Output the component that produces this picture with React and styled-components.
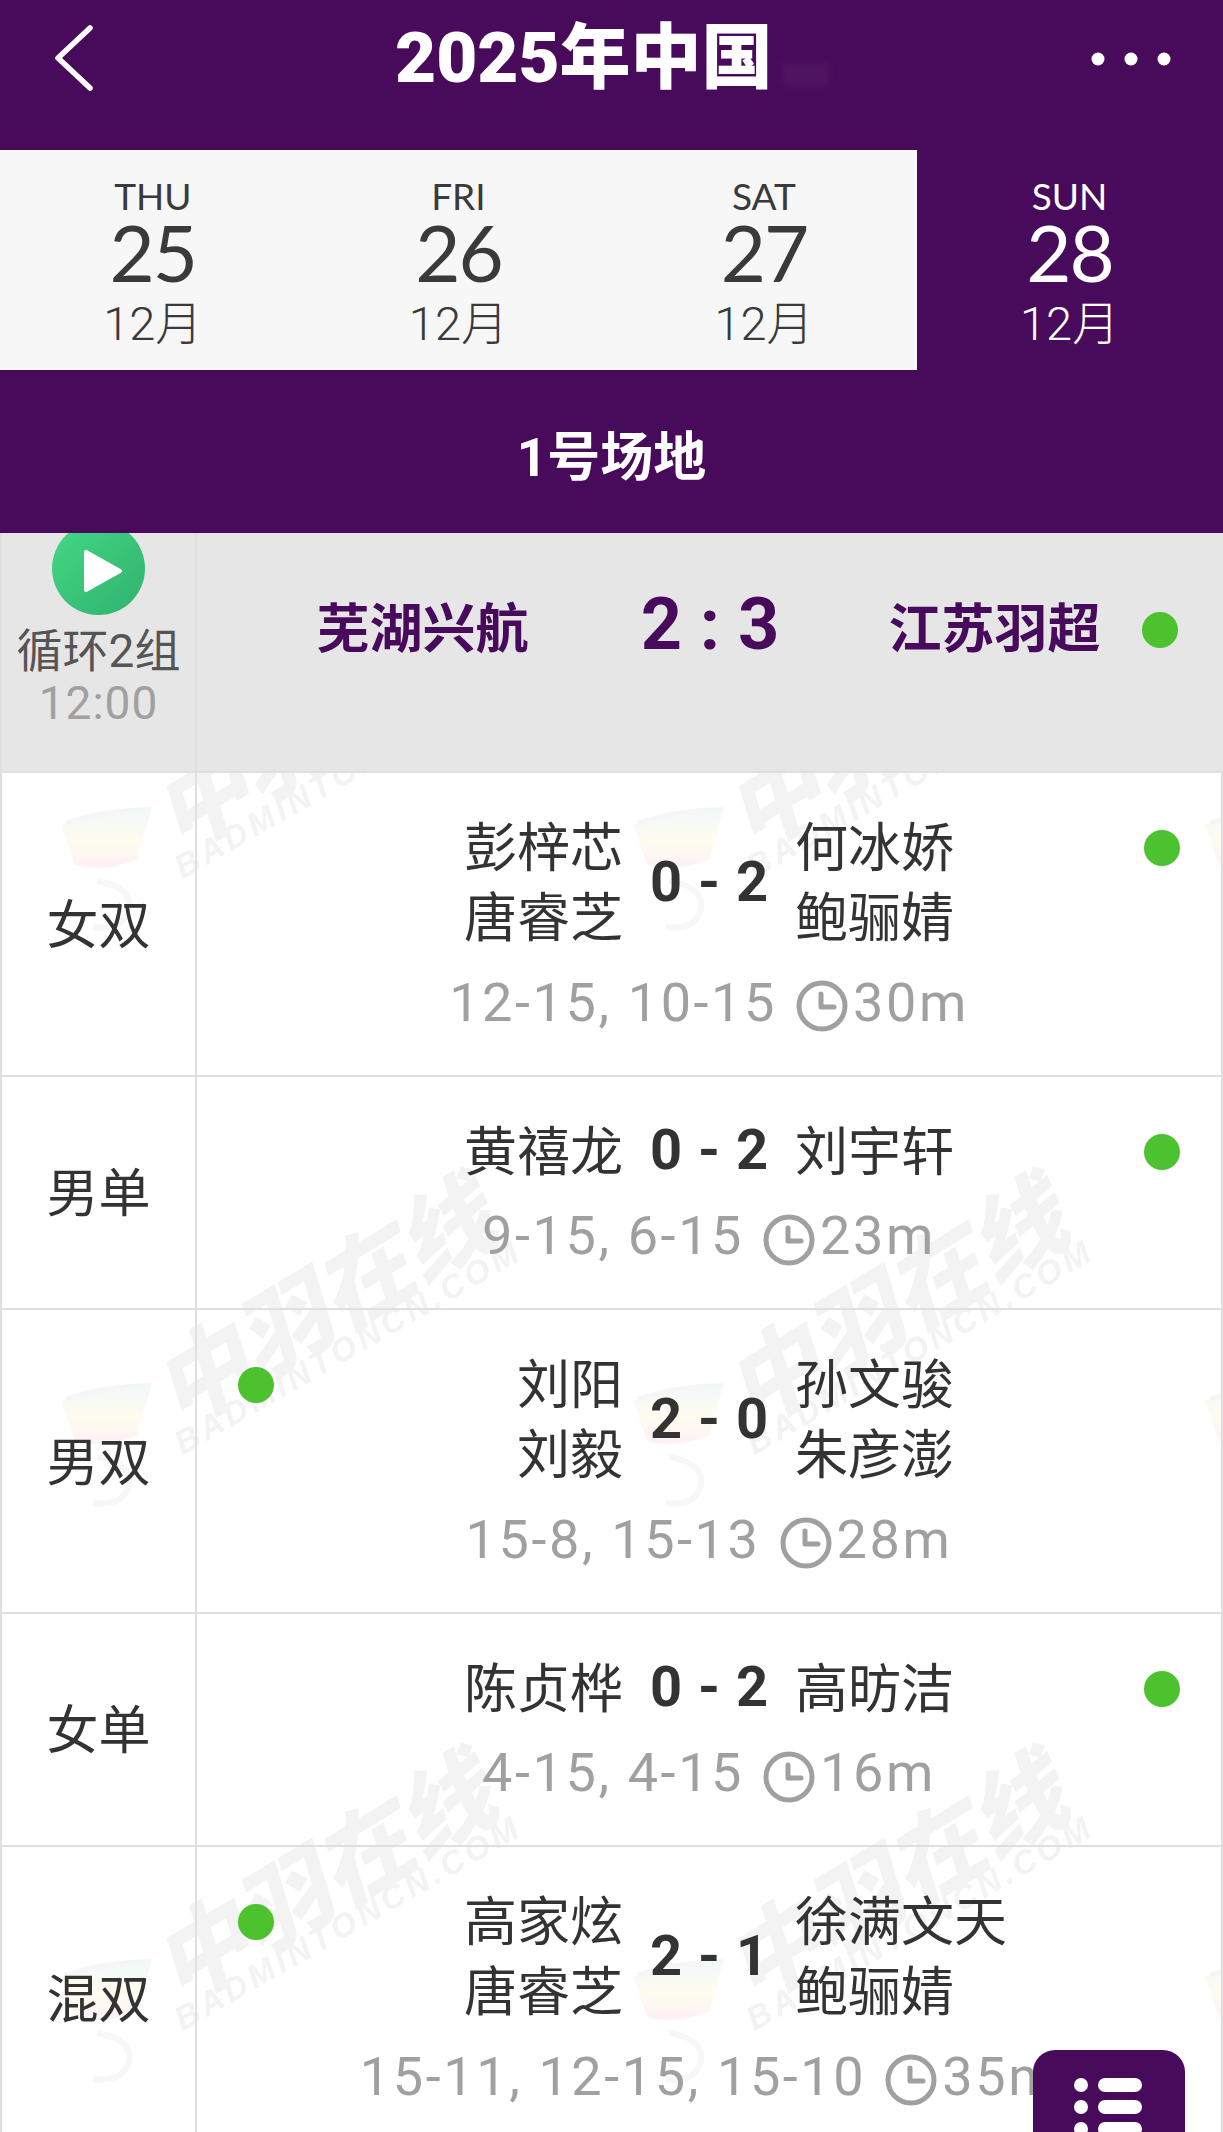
import React from "react";
import styled, { createGlobalStyle } from "styled-components";

const PURPLE = "#480b5c";
const LINE = "#dfdfdf";
const GREY = "#a0a0a0";
const SANS = `Roboto, "Noto Sans CJK SC", sans-serif`;

const GlobalStyle = createGlobalStyle`
  html, body {
    margin: 0;
    padding: 0;
    background: #fff;
  }
`;

const days = [
  { name: "THU", day: 25 },
  { name: "FRI", day: 26 },
  { name: "SAT", day: 27 },
  { name: "SUN", day: 28, active: true },
];

const matches = [
  { type: "女双", left: ["彭梓芯", "唐睿芝"], right: ["何冰娇", "鲍骊婧"], score: "0 - 2", sets: "12-15, 10-15", time: "30m", won: "right" },
  { type: "男单", left: ["黄禧龙"], right: ["刘宇轩"], score: "0 - 2", sets: "9-15, 6-15", time: "23m", won: "right" },
  { type: "男双", left: ["刘阳", "刘毅"], right: ["孙文骏", "朱彦澎"], score: "2 - 0", sets: "15-8, 15-13", time: "28m", won: "left" },
  { type: "女单", left: ["陈贞桦"], right: ["高昉洁"], score: "0 - 2", sets: "4-15, 4-15", time: "16m", won: "right" },
  { type: "混双", left: ["高家炫", "唐睿芝"], right: ["徐满文天", "鲍骊婧"], score: "2 - 1", sets: "15-11, 12-15, 15-10", time: "35m", won: "left" },
];

const Page = styled.div`
  position: relative;
  width: 1223px;
  height: 2132px;
  overflow: hidden;
  background: #fff;
  font-family: ${SANS};
`;

const Header = styled.header`
  display: flex;
  align-items: center;
  height: 150px;
  background: ${PURPLE};
  color: #fff;
`;

const BackIcon = styled.svg`
  width: 395px;
  height: 150px;
  flex: none;
`;

const Title = styled.h1`
  flex: 1;
  display: flex;
  align-items: flex-end;
  margin: -34px 0 0;
  font-size: 71px;
  font-weight: 900;
  line-height: 84px;
  white-space: nowrap;
`;

const Smudge = styled.span`
  width: 46px;
  height: 24px;
  margin: 0 0 14px 10px;
  background: #4e1462;
  filter: blur(3px);
`;

const MoreIcon = styled.svg`
  width: 100px;
  height: 24px;
  margin-right: 42px;
  margin-top: -32px;
`;

const DateBar = styled.nav`
  display: grid;
  grid-template-columns: repeat(4, 305.6px);
  background: ${PURPLE};
`;

const DateTab = styled.div`
  display: flex;
  flex-direction: column;
  align-items: center;
  height: 220px;
  padding-top: 23px;
  box-sizing: border-box;
  background: ${(p) => (p.$active ? PURPLE : "#f7f7f7")};
  color: ${(p) => (p.$active ? "#fff" : "#3a3a3a")};
`;

const DayName = styled.div`
  font-family: Lato, sans-serif;
  font-weight: 400;
  font-size: 37px;
  line-height: 46px;
`;

const DayNumber = styled.div`
  font-family: Lato, sans-serif;
  font-weight: 400;
  font-size: 78px;
  line-height: 66px;
  letter-spacing: -2px;
`;

const Month = styled.div`
  font-size: 47px;
  line-height: 60px;
  font-weight: 300;
  margin-top: 9px;
`;

const Court = styled.div`
  position: relative;
  z-index: 1;
  display: flex;
  align-items: center;
  justify-content: center;
  height: 163px;
  background: ${PURPLE};
  color: #fff;
  font-size: 53px;
  font-weight: 700;
  padding-top: 3px;
  box-sizing: border-box;
`;

const GroupRow = styled.section`
  display: grid;
  grid-template-columns: 197px 1fr;
  height: 240px;
  background: #e6e6e6;
  box-sizing: border-box;
  border-bottom: 2px solid ${LINE};
`;

const GroupInfo = styled.div`
  display: flex;
  flex-direction: column;
  align-items: center;
  overflow: hidden;
  border-left: 2px solid ${LINE};
  border-right: 2px solid ${LINE};
  box-sizing: border-box;
`;

const PlayIcon = styled.svg`
  flex: none;
  width: 93px;
  height: 93px;
  margin-top: -11px;
`;

const GroupName = styled.div`
  margin-top: 8px;
  font-size: 46px;
  line-height: 56px;
  color: #555;
  white-space: nowrap;
`;

const GroupTime = styled.div`
  font-size: 46px;
  line-height: 48px;
  letter-spacing: 1px;
  color: ${GREY};
`;

const Teams = styled.div`
  position: relative;
  display: grid;
  grid-template-columns: 1fr 363px 1fr;
  align-items: center;
  height: 80px;
  margin-top: 49px;
  color: ${PURPLE};
  font-weight: 700;
`;

const TeamName = styled.div`
  font-size: 53px;
  text-align: ${(p) => p.$align};
  margin-left: ${(p) => (p.$align === "left" ? "-3px" : "0")};
`;

const TeamScore = styled.div`
  font-size: 72px;
  text-align: center;
  font-weight: 700;
`;

const Rows = styled.div`
  position: relative;
`;

const Watermark = styled.div`
  position: absolute;
  inset: 0;
  overflow: hidden;
  pointer-events: none;
  filter: blur(0.6px);
`;

const WatermarkGrid = styled.div`
  display: grid;
  grid-template-columns: repeat(3, 572px);
  grid-auto-rows: 576px;
  margin: -218px 0 0 55px;
`;

const Tile = styled.div`
  position: relative;
`;

const WaterLogo = styled.svg`
  position: absolute;
  left: 2px;
  top: 248px;
  width: 100px;
  height: 135px;
  opacity: 0.65;
`;

const WaterBig = styled.div`
  position: absolute;
  left: 276px;
  top: 170px;
  transform: translate(-50%, -50%) rotate(-31deg) skewX(-14deg);
  font-size: 94px;
  font-weight: 900;
  line-height: 1;
  color: #f3f3f3;
  white-space: nowrap;
`;

const WaterSmall = styled.div`
  position: absolute;
  left: 293px;
  top: 216px;
  transform: translate(-50%, -50%) rotate(-30deg);
  font-family: "Liberation Sans", sans-serif;
  font-size: 33px;
  font-style: italic;
  font-weight: 700;
  letter-spacing: 4px;
  color: #f3f3f3;
  white-space: nowrap;
`;

const Row = styled.article`
  position: relative;
  display: grid;
  grid-template-columns: 197px 1fr;
  border-bottom: 2px solid ${LINE};
`;

const RowType = styled.div`
  display: flex;
  align-items: center;
  justify-content: center;
  border-left: 2px solid ${LINE};
  border-right: 2px solid ${LINE};
  padding-bottom: 5px;
  font-size: 52px;
  color: #333;
  box-sizing: border-box;
`;

const RowBody = styled.div`
  position: relative;
  padding: 41px 0 37.5px;
  border-right: 2px solid ${LINE};
`;

const Versus = styled.div`
  display: grid;
  grid-template-columns: 1fr 172px 1fr;
  align-items: center;
  font-size: 53px;
  line-height: 70px;
  color: #333;
`;

const Names = styled.div`
  text-align: ${(p) => p.$align};
  white-space: nowrap;
`;

const Score = styled.div`
  text-align: center;
  font-size: 56px;
  font-weight: 700;
  word-spacing: 2px;
  margin-top: -5px;
`;

const Sets = styled.div`
  display: flex;
  align-items: center;
  justify-content: center;
  height: 70px;
  margin-top: 13px;
  font-size: 54px;
  letter-spacing: 2.6px;
  color: ${GREY};
`;

const ClockIcon = styled.svg`
  width: 54px;
  height: 54px;
  margin: 8px 4px 0 18px;
`;

const Dot = styled.span`
  position: absolute;
  top: 57px;
  width: 36px;
  height: 36px;
  border-radius: 50%;
  background: #4cc22e;
  ${(p) => (p.$side === "left" ? "left: 41px;" : "right: 41px;")}
`;

const TeamDot = styled(Dot)`
  top: 30px;
  right: 45px;
`;

const Fab = styled.button`
  position: absolute;
  right: 38px;
  bottom: -40px;
  width: 152px;
  height: 122px;
  padding: 0;
  border: 0;
  border-radius: 22px;
  background: ${PURPLE};
  display: flex;
  justify-content: center;
  align-items: flex-start;
`;

const FabIcon = styled.svg`
  width: 70px;
  height: 80px;
  margin-top: 28px;
`;

const Mark = () => (
  <Tile>
    <WaterLogo viewBox="0 0 100 135" fill="none">
      <defs>
        <linearGradient id="cup" x1="0" y1="0" x2="0" y2="1">
          <stop offset="0" stopColor="#e9f7f7" />
          <stop offset="0.5" stopColor="#fdfbe6" />
          <stop offset="1" stopColor="#fdeaf0" />
        </linearGradient>
      </defs>
      <path d="M4 22 Q50 8 94 8 L80 56 Q50 70 18 62 Z" fill="url(#cup)" />
      <path d="M8 20 Q50 6 94 6" stroke="#f1f1f1" strokeWidth="4" />
      <path d="M40 78 Q76 84 72 106 Q66 128 36 124" stroke="#f3f3f3" strokeWidth="6" />
    </WaterLogo>
    <WaterBig>中羽在线</WaterBig>
    <WaterSmall>BADMINTONCN.COM</WaterSmall>
  </Tile>
);

const Clock = () => (
  <ClockIcon viewBox="0 0 54 54" fill="none" stroke={GREY} strokeWidth="5" strokeLinecap="round" strokeLinejoin="round">
    <circle cx="27" cy="27" r="23" />
    <path d="M26 15v13h13" />
  </ClockIcon>
);

const App = () => {
  return (
    <Page>
      <GlobalStyle />
      <Header>
        <BackIcon viewBox="0 0 395 150" fill="none">
          <path d="M90 28L58 58l32 30" stroke="#fff" strokeWidth="5.5" strokeLinecap="round" strokeLinejoin="round" />
        </BackIcon>
        <Title>
          2025年中国
          <Smudge />
        </Title>
        <MoreIcon viewBox="0 0 100 24" fill="#fff">
          <circle cx="17" cy="12" r="6.5" />
          <circle cx="50" cy="12" r="6.5" />
          <circle cx="83" cy="12" r="6.5" />
        </MoreIcon>
      </Header>

      <DateBar>
        {days.map((d) => (
          <DateTab key={d.day} $active={d.active}>
            <DayName>{d.name}</DayName>
            <DayNumber>{d.day}</DayNumber>
            <Month>12月</Month>
          </DateTab>
        ))}
      </DateBar>

      <Court>1号场地</Court>

      <GroupRow>
        <GroupInfo>
          <PlayIcon viewBox="0 0 93 93">
            <defs>
              <linearGradient id="play" x1="0" y1="0" x2="1" y2="1">
                <stop offset="0" stopColor="#45d886" />
                <stop offset="1" stopColor="#2fb26c" />
              </linearGradient>
            </defs>
            <circle cx="46.5" cy="46.5" r="46.5" fill="url(#play)" />
            <path d="M34 30v38l34-19z" fill="#fff" stroke="#fff" strokeWidth="4" strokeLinejoin="round" />
          </PlayIcon>
          <GroupName>循环2组</GroupName>
          <GroupTime>12:00</GroupTime>
        </GroupInfo>
        <div>
          <Teams>
            <TeamName $align="right">芜湖兴航</TeamName>
            <TeamScore>2 : 3</TeamScore>
            <TeamName $align="left">江苏羽超</TeamName>
            <TeamDot />
          </Teams>
        </div>
      </GroupRow>

      <Rows>
        <Watermark>
          <WatermarkGrid>
            {Array.from({ length: 9 }, (_, i) => (
              <Mark key={i} />
            ))}
          </WatermarkGrid>
        </Watermark>
        {matches.map((m) => (
          <Row key={m.type}>
            <RowType>{m.type}</RowType>
            <RowBody>
              <Dot $side={m.won} />
              <Versus>
                <Names $align="right">
                  {m.left.map((n) => (
                    <div key={n}>{n}</div>
                  ))}
                </Names>
                <Score>{m.score}</Score>
                <Names $align="left">
                  {m.right.map((n) => (
                    <div key={n}>{n}</div>
                  ))}
                </Names>
              </Versus>
              <Sets>
                {m.sets}
                <Clock />
                {m.time}
              </Sets>
            </RowBody>
          </Row>
        ))}
      </Rows>

      <Fab aria-label="list">
        <FabIcon viewBox="0 0 70 80" fill="#fff">
          <circle cx="7" cy="7" r="7" />
          <rect x="24" y="0" width="44" height="14" rx="7" />
          <circle cx="7" cy="29" r="7" />
          <rect x="24" y="22" width="44" height="14" rx="7" />
          <circle cx="7" cy="51" r="7" />
          <rect x="24" y="44" width="44" height="14" rx="7" />
        </FabIcon>
      </Fab>
    </Page>
  );
};

export default App;
